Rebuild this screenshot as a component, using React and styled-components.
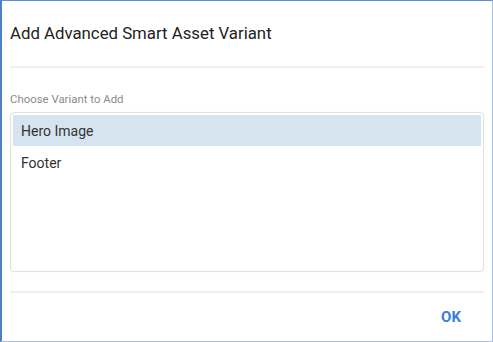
import React, { useState } from 'react';
import styled, { createGlobalStyle } from 'styled-components';

var GlobalStyle = createGlobalStyle`
    html, body {
        margin:0;
        padding:0;
        background:#fff;
    }
    * { box-sizing:border-box; }
`

var Frame = styled.div`
    width:493px;
    height:342px;
    display:flex;
    flex-direction:column;
    background:#fff;
    border-style:solid;
    border-width:1px 1px 1px 2px;
    border-color:#5a8fd0 #a9c1e0 #a9c1e0 #4a80c4;
    font-family:Roboto, "Liberation Sans", sans-serif;
`

var Header = styled.div`
    height:65px;
    padding:22px 8px 0;
`

var Title = styled.h2`
    margin:0;
    font-size:16.8px;
    line-height:20px;
    font-weight:400;
    color:#222;
`

var Divider = styled.div`
    height:2px;
    margin:0 8px;
    background:#efefef;
`

var Body = styled.div`
    padding:24px 8px 0;
    display:flex;
    flex-direction:column;
`

var Label = styled.div`
    font-size:11.4px;
    line-height:14px;
    color:#8a8a8a;
    margin-bottom:6px;
`

var ListBox = styled.div`
    height:160px;
    border:1px solid #e0e0e0;
    border-radius:4px;
    padding:2px;
    display:flex;
    flex-direction:column;
    gap:1px;
    box-shadow:0 0 1px rgba(0,0,0,0.08);
    margin-bottom:19px;
`

var Option = styled.div`
    height:31px;
    padding-left:8px;
    display:flex;
    align-items:center;
    font-size:14px;
    color:#333;
    background:${props => props.selected ? '#d6e4f0' : 'transparent'};
    cursor:pointer;
`

var Footer = styled.div`
    flex:1;
    display:flex;
    justify-content:flex-end;
    align-items:center;
    padding:0 23px 0 0;
`

var OkButton = styled.button`
    border:none;
    background:none;
    padding:4px 8px;
    font-family:Roboto, "Liberation Sans", sans-serif;
    font-size:15px;
    font-weight:700;
    color:#3a7fd5;
    cursor:pointer;
`

var variants = ['Hero Image', 'Footer'];

function App() {
    const [selected, setSelected] = useState('Hero Image');
    return (
        <>
            <GlobalStyle/>
            <Frame>
                <Header>
                    <Title>Add Advanced Smart Asset Variant</Title>
                </Header>
                <Divider/>
                <Body>
                    <Label>Choose Variant to Add</Label>
                    <ListBox>
                        {variants.map(v => (
                            <Option key={v} selected={selected === v} onClick={() => setSelected(v)}>{v}</Option>
                        ))}
                    </ListBox>
                </Body>
                <Divider/>
                <Footer>
                    <OkButton>OK</OkButton>
                </Footer>
            </Frame>
        </>
    )
}

export default App
